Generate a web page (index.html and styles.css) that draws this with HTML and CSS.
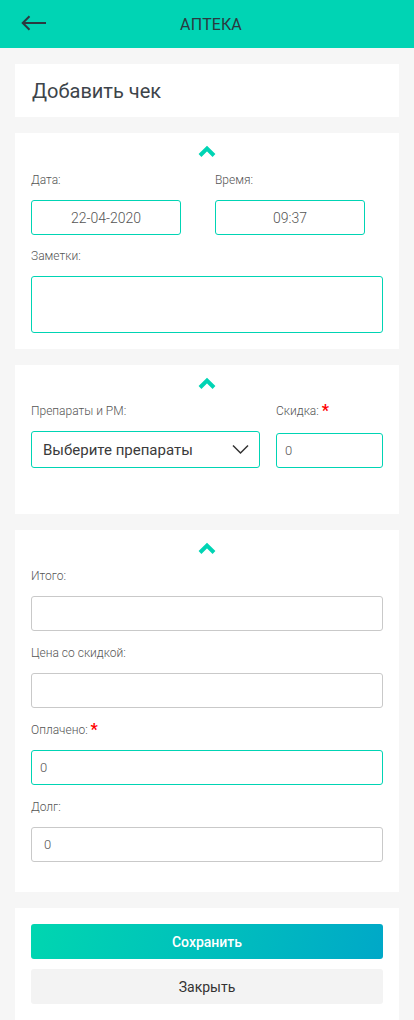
FILE: index.html
```html
<!DOCTYPE html>
<html lang="ru">
<head>
<meta charset="utf-8">
<title>АПТЕКА</title>
<link rel="stylesheet" href="styles.css">
</head>
<body>
<header class="topbar">
  <button class="back" aria-label="Назад">
    <svg width="26" height="16" viewBox="0 0 26 16"><path d="M25 8H2M8.5 1.2L1.7 8l6.8 6.8" fill="none" stroke="#2b3940" stroke-width="2"/></svg>
  </button>
  <h1 class="topbar-title">АПТЕКА</h1>
</header>

<main class="page">
  <section class="card card-title">
    <h2>Добавить чек</h2>
  </section>

  <section class="card">
    <div class="toggle"><svg width="18" height="12" viewBox="0 0 18 12"><path d="M2 10.5L9 3.5l7 7" fill="none" stroke="#00d4b4" stroke-width="4"/></svg></div>
    <div class="row">
      <div class="field half">
        <label class="label">Дата:</label>
        <div class="input accent center">22-04-2020</div>
      </div>
      <div class="field half">
        <label class="label">Время:</label>
        <div class="input accent center">09:37</div>
      </div>
    </div>
    <div class="field">
      <label class="label">Заметки:</label>
      <div class="input accent textarea"></div>
    </div>
  </section>

  <section class="card card-drugs">
    <div class="toggle"><svg width="18" height="12" viewBox="0 0 18 12"><path d="M2 10.5L9 3.5l7 7" fill="none" stroke="#00d4b4" stroke-width="4"/></svg></div>
    <div class="row row-drugs">
      <div class="field grow">
        <label class="label">Препараты и РМ:</label>
        <div class="input accent select">
          <span>Выберите препараты</span>
          <svg width="17" height="11" viewBox="0 0 17 11"><path d="M1 1.5l7.5 7.5 7.5-7.5" fill="none" stroke="#333" stroke-width="1.5"/></svg>
        </div>
      </div>
      <div class="field discount">
        <label class="label">Скидка: <span class="req">*</span></label>
        <div class="input accent small">0</div>
      </div>
    </div>
  </section>

  <section class="card card-totals">
    <div class="toggle"><svg width="18" height="12" viewBox="0 0 18 12"><path d="M2 10.5L9 3.5l7 7" fill="none" stroke="#00d4b4" stroke-width="4"/></svg></div>
    <div class="field">
      <label class="label">Итого:</label>
      <div class="input"></div>
    </div>
    <div class="field">
      <label class="label">Цена со скидкой:</label>
      <div class="input"></div>
    </div>
    <div class="field">
      <label class="label">Оплачено: <span class="req">*</span></label>
      <div class="input accent small">0</div>
    </div>
    <div class="field">
      <label class="label">Долг:</label>
      <div class="input small indent">0</div>
    </div>
  </section>

  <section class="card card-actions">
    <button class="btn btn-save">Сохранить</button>
    <button class="btn btn-close">Закрыть</button>
  </section>
</main>
</body>
</html>
```

FILE: styles.css
```css
* { box-sizing: border-box; }
html, body { margin: 0; padding: 0; }
body {
  background: #f6f6f6;
  font-family: Roboto, "Noto Sans", sans-serif;
  color: #333;
  width: 414px;
}
.topbar {
  height: 48px;
  background: #00d4b4;
  display: flex;
  align-items: center;
  justify-content: center;
  position: relative;
  padding-left: 8px;
}
.back {
  position: absolute;
  left: 21px;
  top: 15px;
  padding: 0;
  border: 0;
  background: none;
  width: 26px;
  height: 16px;
  display: block;
}
.back svg { display: block; }
.topbar-title {
  margin: 0;
  font-size: 16px;
  font-weight: 400;
  color: #2b3940;
  letter-spacing: 0.1px;
  line-height: 20px;
  padding-top: 2px;
}
.page {
  padding: 16px 15px 0;
  display: flex;
  flex-direction: column;
  gap: 16px;
}
.card {
  background: #fff;
  padding: 12px 16px 16px;
  display: flex;
  flex-direction: column;
}
.card-title { padding: 14px 16px 13px; height: 53px; }
.card-title h2 {
  margin: 0;
  font-size: 20px;
  font-weight: 400;
  color: #3d444a;
  line-height: 26px;
  padding-left: 1px;
}
.toggle {
  height: 12px;
  display: flex;
  justify-content: center;
  margin-bottom: 16px;
}
.toggle svg { display: block; }
.row { display: flex; gap: 34px; }
.row-drugs { gap: 16px; }
.field { display: flex; flex-direction: column; margin-bottom: 14px; }
.field:last-child { margin-bottom: 0; }
.row .field { margin-bottom: 14px; }
.row-drugs .field { margin-bottom: 0; }
.half { width: 150px; }
.grow { flex: 1; }
.discount { width: 107px; }
.label {
  font-size: 12px;
  font-weight: 300;
  color: #555;
  line-height: 14px;
  height: 14px;
  margin-bottom: 13px;
  white-space: nowrap;
}
.req {
  color: #f00;
  font-weight: 700;
  font-size: 16px;
  line-height: 10px;
  position: relative;
  top: 1px;
}
.input {
  height: 35px;
  border: 1px solid #c9c9c9;
  border-radius: 3px;
  background: #fff;
  display: flex;
  align-items: center;
  font-size: 13px;
  font-weight: 300;
  color: #555;
  padding: 0 8px;
}
.accent { border-color: #00d4b4; }
.center { justify-content: center; font-size: 14px; }
.textarea { height: 57px; }
.select {
  height: 37px;
  justify-content: space-between;
  padding: 0 10px 0 11px;
  font-size: 15px;
  font-weight: 400;
  color: #3a3a3a;
}
.select svg { display: block; }
.small { font-size: 13px; }
.discount .input { margin-top: 2px; }
.indent { padding-left: 12px; }
.card-drugs { padding-bottom: 46px; }
.card-drugs .toggle { margin-bottom: 15px; }
.card-totals { padding-bottom: 30px; }
.card-totals .toggle { margin-bottom: 15px; }
.card-totals .field { margin-bottom: 15px; }
.card-totals .field:last-child { margin-bottom: 0; }
.card-actions { padding: 16px 16px 16px; gap: 10px; }
.btn {
  height: 35px;
  border: 0;
  border-radius: 3px;
  font-family: Roboto, "Noto Sans", sans-serif;
  font-size: 14px;
  width: 100%;
}
.btn-save {
  background: linear-gradient(105deg, #00d6b0 0%, #00c0bc 50%, #00a8c8 100%);
  color: #fff;
  font-weight: 500;
}
.btn-close {
  background: #f3f3f3;
  color: #333;
  font-weight: 400;
}
```
